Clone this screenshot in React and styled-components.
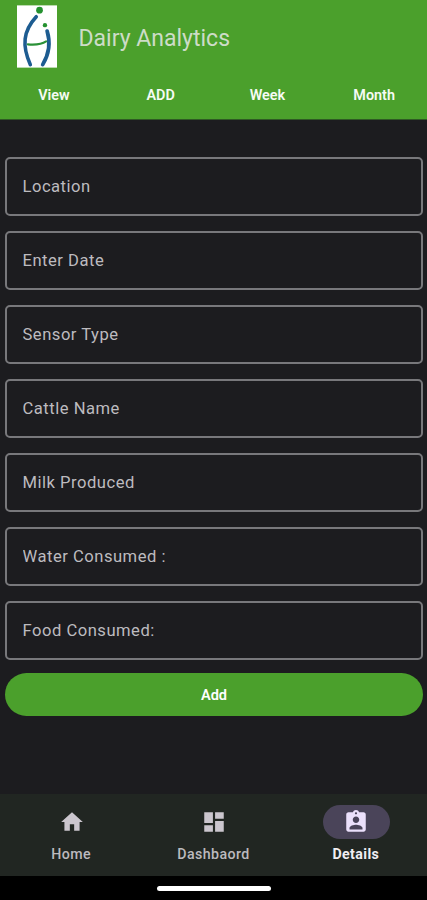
import React from "react";

import styled, { createGlobalStyle } from "styled-components";
import { MdAssignmentInd, MdDashboard, MdHome } from "react-icons/md";

const colors = {
  primary: "#4ba02c",
  background: "#1c1c1f",
  outline: "#78787b",
  label: "#bdbbbf",
  navigation: "#212622",
  indicator: "#4a4459",
};

const GlobalStyle = createGlobalStyle`
  * {
    box-sizing: border-box;
  }
  body {
    margin: 0;
    background-color: ${colors.background};
    font-family: Roboto, sans-serif;
  }
`;

const Screen = styled.div`
  display: flex;
  flex-direction: column;
  width: 100%;
  height: 900px;
  background-color: ${colors.background};
`;

const Header = styled.header`
  height: 120px;
  background-color: ${colors.primary};
  border-bottom: 1px solid #2f5a24;
`;

const Brand = styled.div`
  display: flex;
  align-items: center;
  height: 72px;
  padding-left: 16.5px;
`;

const Logo = styled.svg`
  display: block;
  width: 40.5px;
  height: 63px;
`;

const Title = styled.h1`
  margin: 0 0 0 21.5px;
  padding-top: 5px;
  color: #cddcc7;
  font-size: 23px;
  font-weight: 400;
  line-height: 30px;
`;

const Tabs = styled.nav`
  display: grid;
  grid-template-columns: repeat(4, 1fr);
  height: 47px;
`;

const Tab = styled.button`
  padding: 0 0 0 1px;
  border: 0;
  background: none;
  color: #f6fbf4;
  font: 600 14.4px/46px Roboto, sans-serif;
`;

const Form = styled.form`
  display: flex;
  flex: 1;
  flex-direction: column;
  padding: 37px 4px 0 5px;
`;

const Field = styled.input`
  display: block;
  width: 100%;
  height: 59px;
  margin-bottom: 15px;
  padding: 0 15.5px;
  border: 2px solid ${colors.outline};
  border-radius: 5px;
  outline: 0;
  background: none;
  color: ${colors.label};
  font: 400 16.6px Roboto, sans-serif;
  letter-spacing: 0.5px;
  &::placeholder {
    color: ${colors.label};
    opacity: 1;
  }
`;

const Submit = styled.button`
  height: 43px;
  margin-top: -2px;
  padding: 2px 0 0;
  border: 0;
  border-radius: 22px;
  background-color: ${colors.primary};
  color: #fff;
  font: 600 14.5px Roboto, sans-serif;
`;

const Navigation = styled.nav`
  display: grid;
  grid-template-columns: repeat(3, 1fr);
  height: 82px;
  background-color: ${colors.navigation};
`;

const NavItem = styled.a`
  display: flex;
  flex-direction: column;
  align-items: center;
  padding-top: 11px;
  color: ${(props) => (props.$active ? "#f0eef2" : "#bcbabe")};
  font-size: 14.2px;
  font-weight: ${(props) => (props.$active ? 700 : 500)};
  letter-spacing: 0.4px;
  line-height: 31px;
`;

const Indicator = styled.span`
  display: flex;
  align-items: center;
  justify-content: center;
  width: 67px;
  height: 34px;
  margin-left: 1px;
  border-radius: 17px;
  background-color: ${(props) => (props.$active ? colors.indicator : "transparent")};
  color: ${(props) => (props.$active ? "#ebe0fb" : "#cbc6ce")};
`;

const GestureBar = styled.footer`
  display: flex;
  justify-content: center;
  height: 24px;
  padding-top: 10px;
  background-color: #000;
  &::after {
    content: "";
    width: 114px;
    height: 5px;
    border-radius: 3px;
    background-color: #fff;
  }
`;

const tabs = ["View", "ADD", "Week", "Month"];

const fields = [
  "Location",
  "Enter Date",
  "Sensor Type",
  "Cattle Name",
  "Milk Produced",
  "Water Consumed :",
  "Food Consumed:",
];

const destinations = [
  { label: "Home", icon: MdHome },
  { label: "Dashbaord", icon: MdDashboard },
  { label: "Details", icon: MdAssignmentInd, active: true },
];

const BrandLogo = () => (
  <Logo viewBox="0 0 41 63" fill="none" strokeLinecap="round">
    <rect width="41" height="63" fill="#fff" />
    <path d="M19.500 11.500C6 26 5 41 13.500 60" stroke="#1d5c91" strokeWidth="3.6" />
    <path d="M30.500 26C34.500 39 32 50 26 60" stroke="#1d5c91" strokeWidth="3.8" />
    <path d="M11 39.500C17 40 25 39.500 29.500 36.500" stroke="#2b9138" strokeWidth="2.2" />
    <circle cx="22.800" cy="4.800" r="3.400" fill="#24912f" />
    <circle cx="28.300" cy="20" r="2.200" fill="#24912f" />
  </Logo>
);

const App = () => {
  return (
    <Screen>
      <GlobalStyle />
      <Header>
        <Brand>
          <BrandLogo />
          <Title>Dairy Analytics</Title>
        </Brand>
        <Tabs>
          {tabs.map((tab) => (
            <Tab key={tab}>{tab}</Tab>
          ))}
        </Tabs>
      </Header>
      <Form>
        {fields.map((field) => (
          <Field key={field} placeholder={field} />
        ))}
        <Submit type="button">Add</Submit>
      </Form>
      <Navigation>
        {destinations.map(({ label, icon: Icon, active }) => (
          <NavItem key={label} $active={active}>
            <Indicator $active={active}>
              <Icon size={26} />
            </Indicator>
            {label}
          </NavItem>
        ))}
      </Navigation>
      <GestureBar />
    </Screen>
  );
};

export default App;
